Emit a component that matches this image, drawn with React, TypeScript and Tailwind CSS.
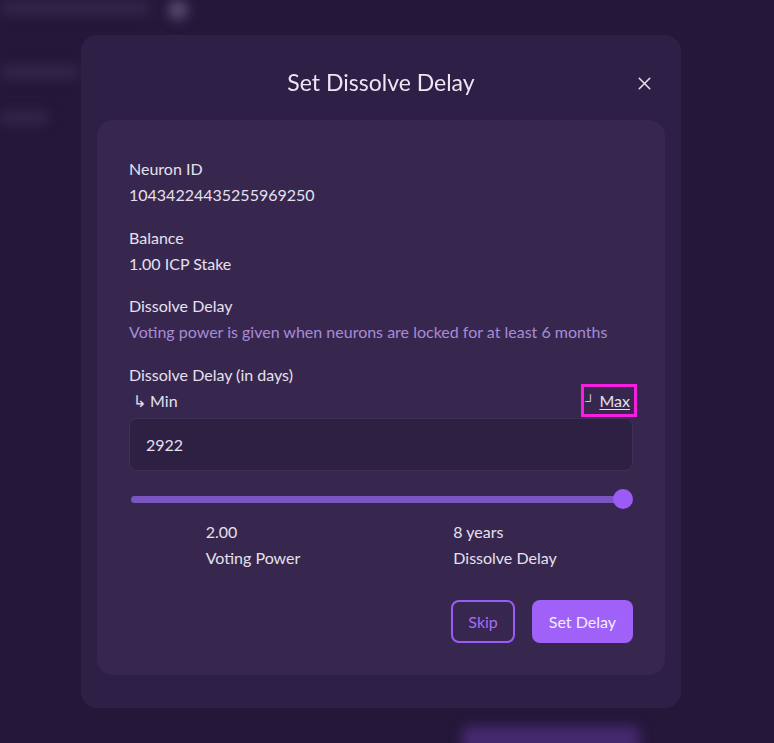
import React from 'react';
import { X } from 'lucide-react';

const font = { fontFamily: 'Lato, "Noto Sans", sans-serif' };

export default function App() {
  return (
    <div className="relative w-[774px] h-[743px] overflow-hidden bg-[#24173a]" style={font}>
      {/* blurred page behind the modal */}
      <div className="absolute inset-0 blur-[6px]">
        <div className="absolute left-0 top-[2px] w-[150px] h-[12px] rounded bg-[#3a2d55]/70" />
        <div className="absolute left-[168px] top-0 w-[20px] h-[20px] rounded-full bg-[#574a72]" />
        <div className="absolute left-0 top-[66px] w-[80px] h-[12px] rounded bg-[#3a2d55]/70" />
        <div className="absolute left-0 top-[112px] w-[48px] h-[12px] rounded bg-[#3a2d55]/70" />
        <div className="absolute left-[462px] top-[726px] w-[178px] h-[40px] rounded-lg bg-[#45296e]" />
      </div>

      <div className="relative pt-[35px] pl-[81px]">
        <div className="w-[600px] rounded-2xl bg-[#2d1f45] px-4 pb-[33px]">
          <div className="relative h-[85px] flex items-center justify-center">
            <h2 className="text-[23px] text-[#ece6f3] pt-[9px]">Set Dissolve Delay</h2>
            <button className="absolute right-[10px] top-[38px] text-[#e5dff0]">
              <X size={21} strokeWidth={1.8} />
            </button>
          </div>

          <div className="rounded-2xl bg-[#37274f] px-8 pt-[36px] pb-8 text-[16px] leading-[26px] text-[#e6e0ee]">
            <div className="flex flex-col gap-[17px]">
              <div className="flex flex-col">
                <span>Neuron ID</span>
                <span>10434224435255969250</span>
              </div>
              <div className="flex flex-col">
                <span>Balance</span>
                <span>1.00 ICP Stake</span>
              </div>
              <div className="flex flex-col -mt-[1px]">
                <span>Dissolve Delay</span>
                <span className="text-[#a88bd6]">Voting power is given when neurons are locked for at least 6 months</span>
              </div>
              <div className="flex flex-col">
                <span>Dissolve Delay (in days)</span>
                <div className="flex items-center justify-between -mt-[4px] h-[33px]">
                  <span className="pl-[4px]">↳ Min</span>
                  <span className="border-[3px] border-[#f61fe0] pl-[2px] pr-[4px] h-[33px] flex items-center -mr-[4px]">
                    <span className="text-[13px] mr-[4px] leading-none">┘</span>
                    <span className="underline underline-offset-2">Max</span>
                  </span>
                </div>
                <div className="mt-[1px] h-[53px] rounded-lg border border-[#3f3058] bg-[#2d2043] flex items-center px-4">
                  2922
                </div>
              </div>
            </div>

            <div className="relative mt-[16px] h-[24px] flex items-center">
              <div className="ml-[2px] mr-[10px] h-[7px] flex-1 rounded-full bg-[#7a55c0]" />
              <div className="absolute right-0 top-[2px] w-[20px] h-[20px] rounded-full bg-[#9a5cf5]" />
            </div>

            <div className="grid grid-cols-2 mt-[8px]">
              <div className="flex justify-center pr-[4px]">
                <div className="flex flex-col">
                  <span>2.00</span>
                  <span>Voting Power</span>
                </div>
              </div>
              <div className="flex justify-center pr-[4px]">
                <div className="flex flex-col">
                  <span>8 years</span>
                  <span>Dissolve Delay</span>
                </div>
              </div>
            </div>

            <div className="flex justify-end gap-[17px] mt-[29px]">
              <button className="h-[43px] px-[15px] rounded-lg border-2 border-[#9a5cf5] text-[#a56cf5]">Skip</button>
              <button className="h-[43px] px-[17px] rounded-lg bg-[#9f61f7] text-[#f3ecfd]">Set Delay</button>
            </div>
          </div>
        </div>
      </div>
    </div>
  );
}
